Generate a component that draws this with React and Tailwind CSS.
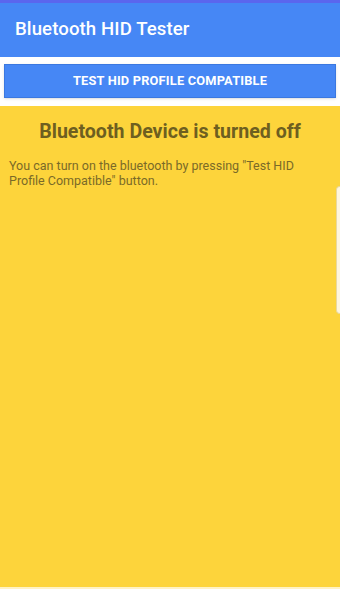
export default function App() {
  return (
    <div className="w-[340px] h-[589px] flex flex-col bg-white font-['Roboto',sans-serif] overflow-hidden">
      <div className="h-[3px] bg-[#5a66ee]" />
      <div className="h-[54px] bg-[#4687f5] flex items-center px-[15px]">
        <span className="text-white text-[18.6px] font-medium tracking-[0.1px]">Bluetooth HID Tester</span>
      </div>
      <div className="px-[4px] pt-[7px] pb-[8px] bg-white">
        <button className="w-full h-[34px] bg-[#4687f5] border border-[#3b78e0] shadow-sm text-white text-[12.8px] font-bold tracking-[0.2px]">
          TEST HID PROFILE COMPATIBLE
        </button>
      </div>
      <div className="relative flex-1 bg-[#fdd43b]">
        <h1 className="text-center text-[#6e5f20] text-[19.6px] font-bold mt-[11px]">Bluetooth Device is turned off</h1>
        <p className="pl-[9px] pr-[20px] mt-[12px] text-[#7a6a28] text-[12.5px] leading-[15px]">
          You can turn on the bluetooth by pressing "Test HID Profile Compatible" button.
        </p>
        <div className="absolute right-0 top-[80px] w-[4px] h-[128px] bg-[#fff6dc] border border-r-0 border-[#e8d9a0] rounded-l-sm" />
      </div>
      <div className="h-[2px] bg-[#fff2c4]" />
    </div>
  );
}
